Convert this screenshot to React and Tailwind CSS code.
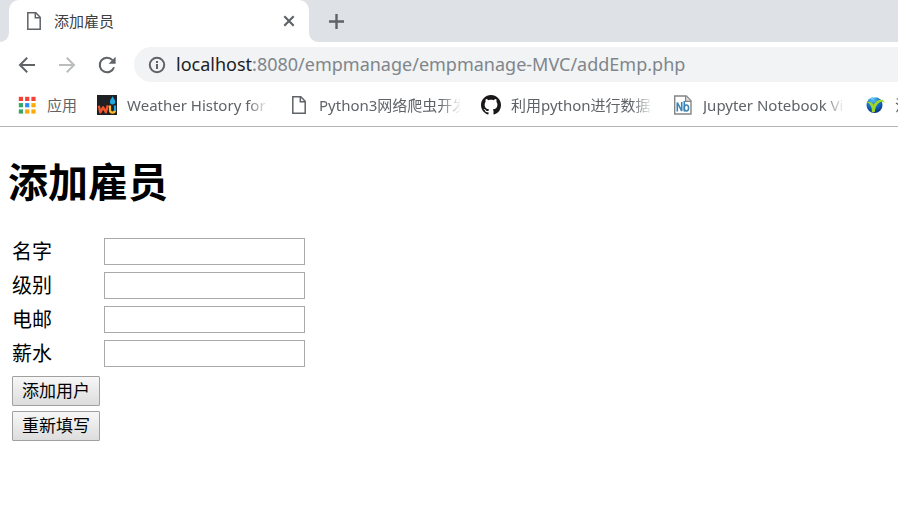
import React from 'react';

const FIELDS = [
  { id: 'name', label: '名字' },
  { id: 'grade', label: '级别' },
  { id: 'email', label: '电邮' },
  { id: 'salary', label: '薪水' },
];

function PageIcon() {
  return (
    <svg viewBox="0 0 20 20" className="size-5 shrink-0" fill="none" stroke="#5f6368" strokeWidth="1.5">
      <path d="M3.800 1.800h8l4.400 4.400v12H3.800z" />
      <path d="M11.300 2v4.700H16" />
    </svg>
  );
}

function AppsIcon() {
  const colors = ['#f44336', '#f44336', '#f44336', '#34a862', '#2f8df5', '#fbab09', '#34a862', '#fbab09', '#fbab09'];
  return (
    <svg viewBox="0 0 20 20" className="size-5 shrink-0">
      {colors.map((color, i) => (
        <rect key={i} x={1.8 + (i % 3) * 6.3} y={1.8 + Math.floor(i / 3) * 6.3} width="4.200" height="4.200" fill={color} />
      ))}
    </svg>
  );
}

function WeatherIcon() {
  return (
    <svg viewBox="0 0 20 20" className="size-5 shrink-0">
      <rect width="20" height="20" fill="#1e2023" />
      <path d="M1.800 10.800l1.500 6.500 2.800-5 2.700 5 2-7" fill="none" stroke="#f2542d" strokeWidth="2.400" strokeLinejoin="round" />
      <path d="M13 10.500v4.800c0 3 5 3 5 0" fill="none" stroke="#fdb827" strokeWidth="2.200" />
      <path d="M18 15.800v-5.300" stroke="#1ea7dd" strokeWidth="2.200" />
      <path d="M15.600 1.300c1.200 2.400 2.700 3.800 2.700 5.500a2.700 2.700 0 0 1-5.400 0c0-1.700 1.500-3.100 2.700-5.500z" fill="#1ea7dd" />
    </svg>
  );
}

function GithubIcon() {
  return (
    <svg viewBox="0 0 16 16" className="size-5 shrink-0" fill="#191717">
      <path d="M8 0C3.58 0 0 3.58 0 8c0 3.54 2.29 6.53 5.47 7.59.4.07.55-.17.55-.38 0-.19-.01-.82-.01-1.49-2.01.37-2.53-.49-2.69-.94-.09-.23-.48-.94-.82-1.13-.28-.15-.68-.52-.01-.53.63-.01 1.08.58 1.23.82.72 1.21 1.87.87 2.33.66.07-.52.28-.87.51-1.07-1.78-.2-3.64-.89-3.64-3.95 0-.87.31-1.59.82-2.15-.08-.2-.36-1.02.08-2.12 0 0 .67-.21 2.2.82.64-.18 1.32-.27 2-.27s1.36.09 2 .27c1.530-1.040 2.200-.820 2.200-.820.440 1.100.160 1.920.080 2.120.510.560.820 1.270.820 2.150 0 3.070-1.870 3.750-3.650 3.950.290.250.540.730.540 1.480 0 1.070-.010 1.930-.010 2.200 0 .210.150.460.550.380A8.010 8.010 0 0 0 16 8c0-4.420-3.580-8-8-8z" />
    </svg>
  );
}

function NotebookIcon() {
  return (
    <svg viewBox="0 0 20 20" className="size-5 shrink-0" fill="none">
      <path d="M1.700 1h11.600l4.700 4.700V19H1.700z" fill="#fff" stroke="#858585" strokeWidth="1.400" />
      <path d="M12.600 1v5.400H18" fill="#ddd" stroke="#858585" strokeWidth="1.200" />
      <path d="M4.300 16.500V7.500l4.400 8.500V7" stroke="#3b82b5" strokeWidth="1.600" />
      <path d="M11.300 6v10.500" stroke="#3b82b5" strokeWidth="1.600" />
      <ellipse cx="13.400" cy="13" rx="2.200" ry="2.900" stroke="#3b82b5" strokeWidth="1.500" />
    </svg>
  );
}

function GlobeIcon() {
  return (
    <svg viewBox="0 0 20 20" className="size-5 shrink-0">
      <defs>
        <radialGradient id="globe" cx=".4" cy=".15" r=".9">
          <stop offset="0" stopColor="#5cc3f5" />
          <stop offset=".5" stopColor="#1670c8" />
          <stop offset="1" stopColor="#062d7a" />
        </radialGradient>
      </defs>
      <circle cx="9.500" cy="10" r="8" fill="url(#globe)" />
      <path d="M1.500 7c3.500-.8 6 .5 7 3 2-3.800 5.500-5.700 9.500-5l2 3-2.400-1.200c-4.600.3-7.200 4-7.800 10.200l-3 .2C7.300 12.500 5.500 8.500 1.500 7z" fill="#9ed62a" />
      <path d="M5 4.200c2-2 5-2.600 8-1.600-2.800 0-5.500.5-8 1.600z" fill="#a9e3fa" />
    </svg>
  );
}

const BOOKMARKS = [
  { text: 'Weather History for', Icon: WeatherIcon },
  { text: 'Python3网络爬虫开发', Icon: PageIcon },
  { text: '利用python进行数据分', Icon: GithubIcon },
  { text: 'Jupyter Notebook Vi', Icon: NotebookIcon },
  { text: '注', Icon: GlobeIcon },
];

function TabStrip() {
  return (
    <div className="flex h-[42px] bg-[#dee1e6] pl-[9px]">
      <div className="relative flex w-[300px] shrink-0 items-center rounded-t-[10px] bg-white pr-3 pl-[15px]">
        <span className="absolute bottom-0 -left-[9px] h-[10px] w-[9px] bg-white">
          <span className="block size-full rounded-br-[9px] bg-[#dee1e6]" />
        </span>
        <span className="absolute -right-[9px] bottom-0 h-[10px] w-[9px] bg-white">
          <span className="block size-full rounded-bl-[9px] bg-[#dee1e6]" />
        </span>
        <PageIcon />
        <span className="ml-[10px] flex-1 text-[15px] text-[#3c4043]">添加雇员</span>
        <button type="button" aria-label="关闭" className="flex size-4 items-center justify-center">
          <svg viewBox="0 0 16 16" className="size-4" stroke="#5f6368" strokeWidth="2.200">
            <path d="M3.300 3.300l9.400 9.400M12.700 3.300l-9.400 9.400" />
          </svg>
        </button>
      </div>
      <button type="button" aria-label="打开新的标签页" className="ml-[19px] flex items-center">
        <svg viewBox="0 0 16 16" className="size-4" stroke="#5f6368" strokeWidth="2.400">
          <path d="M8.500 1v15M1 8.500h15" />
        </svg>
      </button>
    </div>
  );
}

function Toolbar() {
  return (
    <div className="flex h-[45px] items-center pl-[17px]">
      <button type="button" aria-label="后退" className="mr-5 shrink-0">
        <svg viewBox="0 0 20 20" className="size-5" fill="none" stroke="#5f6368" strokeWidth="2">
          <path d="M18 10H3.500M10.200 2.800L3 10l7.200 7.200" />
        </svg>
      </button>
      <button type="button" aria-label="前进" className="mr-5 shrink-0" disabled>
        <svg viewBox="0 0 20 20" className="size-5" fill="none" stroke="#babcbe" strokeWidth="2">
          <path d="M2 10h14.500M9.800 2.800L17 10l-7.200 7.200" />
        </svg>
      </button>
      <button type="button" aria-label="重新加载" className="mr-[17px] shrink-0">
        <svg viewBox="0 0 20 20" className="size-5" fill="none" stroke="#5f6368" strokeWidth="2">
          <path d="M17 12.200A7.300 7.300 0 1 1 15.500 5.100" />
          <path d="M18.600 1.800v7h-7z" fill="#5f6368" stroke="none" />
        </svg>
      </button>
      <div className="flex h-[35px] flex-1 items-center overflow-hidden rounded-l-full bg-[#f1f3f4] pl-[14px]">
        <svg viewBox="0 0 18 18" className="size-[18px] shrink-0" fill="none" stroke="#5f6368" strokeWidth="2">
          <circle cx="9" cy="9" r="7.200" />
          <path d="M9 8v5M9 5v2" />
        </svg>
        <span className="ml-[10px] pb-px text-[18px] leading-6 whitespace-nowrap text-[#80868b]">
          <span className="text-[#202124]">localhost</span>:8080/empmanage/empmanage-MVC/addEmp.php
        </span>
      </div>
    </div>
  );
}

function BookmarksBar() {
  return (
    <nav className="flex h-10 items-center overflow-hidden border-b border-[#b3b3b3] pb-[3px] pl-[17px] text-[15px] text-[#5f6368]">
      <a href="#apps" className="mr-5 flex shrink-0 items-center gap-[10px]">
        <AppsIcon />
        <span>应用</span>
      </a>
      {BOOKMARKS.map(({ text, Icon }) => (
        <a key={text} href="#bookmark" className="mr-5 flex w-[172px] shrink-0 items-center gap-[10px]">
          <Icon />
          <span className="flex-1 overflow-hidden mask-r-from-85% whitespace-nowrap">{text}</span>
        </a>
      ))}
    </nav>
  );
}

function ActionButton({ type, children }) {
  return (
    <button
      type={type}
      className="block h-[30px] rounded-[1px] border border-[#a0a0a0] bg-linear-to-b from-[#f7f7f7] to-[#dddddd] px-[9px] text-[17px] leading-6 whitespace-nowrap"
    >
      {children}
    </button>
  );
}

export default function App() {
  return (
    <div className="min-h-screen overflow-hidden bg-white font-['Noto_Sans','Noto_Sans_CJK_SC',sans-serif] text-black">
      <header>
        <TabStrip />
        <Toolbar />
        <BookmarksBar />
      </header>
      <main className="px-2 pt-[27px]">
        <h1 className="mb-[25px] text-[40px] leading-14 font-bold">添加雇员</h1>
        <form onSubmit={(e) => e.preventDefault()}>
          <table className="ml-1 border-collapse text-[20px] leading-7">
            <tbody>
              {FIELDS.map(({ id, label }) => (
                <tr key={id}>
                  <td className="w-[92px] p-0 pt-[3px] pb-[3px]">
                    <label htmlFor={id} className="block h-7">{label}</label>
                  </td>
                  <td className="p-0 pt-[3px] pb-1">
                    <input id={id} type="text" className="block h-[27px] w-[201px] border border-[#a9a9a9] bg-white px-1 text-[17px]" />
                  </td>
                </tr>
              ))}
              <tr>
                <td className="p-0 pt-[5px]"><ActionButton type="submit">添加用户</ActionButton></td>
              </tr>
              <tr>
                <td className="p-0 pt-[5px]"><ActionButton type="reset">重新填写</ActionButton></td>
              </tr>
            </tbody>
          </table>
        </form>
      </main>
    </div>
  );
}
